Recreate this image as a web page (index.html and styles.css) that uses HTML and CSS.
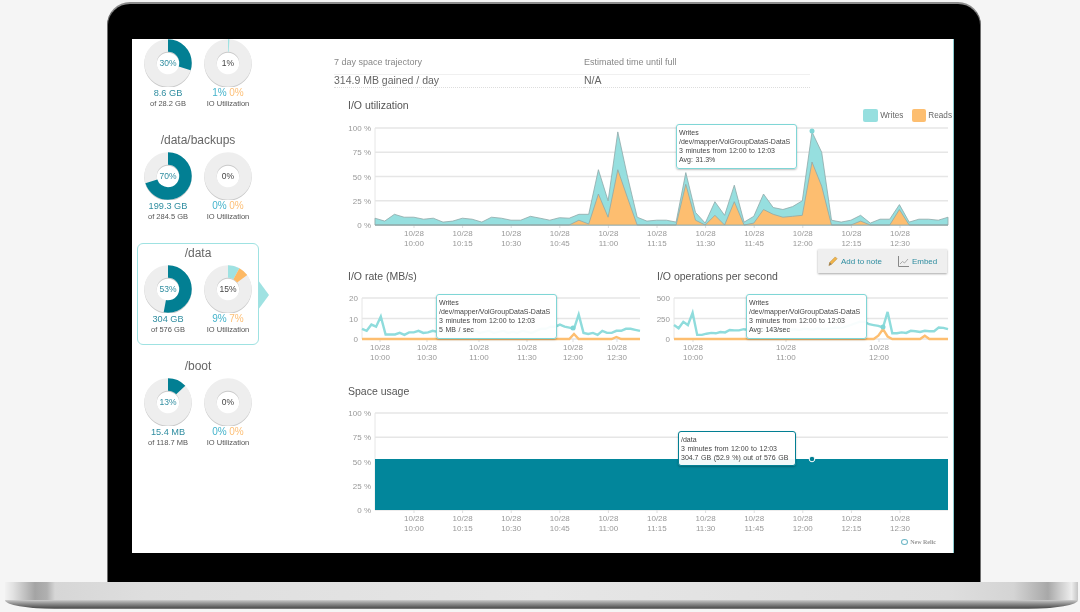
FILE: index.html
```html
<!DOCTYPE html>
<html>
<head>
<meta charset="utf-8"/>
<title>Disk overview</title>
<link rel="stylesheet" href="styles.css">
</head>
<body>
<div class="lid">
  <div class="screen">
    <div class="sidebar">
      <div class="disk">
        <h3></h3>
        <div class="disk-stats">
          <div class="stat">
            <svg class="donut" width="48" height="48" viewBox="0 0 48 48"><circle class="ring" cx="24" cy="24" r="17.5"/><circle class="used" cx="24" cy="24" r="17.5" pathLength="100" stroke-dasharray="30 100"/></svg>
            <div class="donut-label used-label">30%</div>
            <div class="value">8.6 GB</div>
            <div class="sub">of 28.2 GB</div>
          </div>
          <div class="stat">
            <svg class="donut" width="48" height="48" viewBox="0 0 48 48"><circle class="ring" cx="24" cy="24" r="17.5"/><circle class="writes" cx="24" cy="24" r="17.5" pathLength="100" stroke-dasharray="1 100"/></svg>
            <div class="donut-label">1%</div>
            <div class="value"><span class="w">1%</span> <span class="r">0%</span></div>
            <div class="sub">IO Utilization</div>
          </div>
        </div>
      </div>
      <div class="disk">
        <h3>/data/backups</h3>
        <div class="disk-stats">
          <div class="stat">
            <svg class="donut" width="48" height="48" viewBox="0 0 48 48"><circle class="ring" cx="24" cy="24" r="17.5"/><circle class="used" cx="24" cy="24" r="17.5" pathLength="100" stroke-dasharray="70 100"/></svg>
            <div class="donut-label used-label">70%</div>
            <div class="value">199.3 GB</div>
            <div class="sub">of 284.5 GB</div>
          </div>
          <div class="stat">
            <svg class="donut" width="48" height="48" viewBox="0 0 48 48"><circle class="ring" cx="24" cy="24" r="17.5"/></svg>
            <div class="donut-label">0%</div>
            <div class="value"><span class="w">0%</span> <span class="r">0%</span></div>
            <div class="sub">IO Utilization</div>
          </div>
        </div>
      </div>
      <div class="disk active">
        <h3>/data</h3>
        <div class="disk-stats">
          <div class="stat">
            <svg class="donut" width="48" height="48" viewBox="0 0 48 48"><circle class="ring" cx="24" cy="24" r="17.5"/><circle class="used" cx="24" cy="24" r="17.5" pathLength="100" stroke-dasharray="53 100"/></svg>
            <div class="donut-label used-label">53%</div>
            <div class="value">304 GB</div>
            <div class="sub">of 576 GB</div>
          </div>
          <div class="stat">
            <svg class="donut" width="48" height="48" viewBox="0 0 48 48"><circle class="ring" cx="24" cy="24" r="17.5"/><circle class="writes" cx="24" cy="24" r="17.5" pathLength="100" stroke-dasharray="8 100"/><circle class="reads" cx="24" cy="24" r="17.5" pathLength="100" stroke-dasharray="7 100" stroke-dashoffset="-8"/></svg>
            <div class="donut-label">15%</div>
            <div class="value"><span class="w">9%</span> <span class="r">7%</span></div>
            <div class="sub">IO Utilization</div>
          </div>
        </div>
      </div>
      <div class="disk">
        <h3>/boot</h3>
        <div class="disk-stats">
          <div class="stat">
            <svg class="donut" width="48" height="48" viewBox="0 0 48 48"><circle class="ring" cx="24" cy="24" r="17.5"/><circle class="used" cx="24" cy="24" r="17.5" pathLength="100" stroke-dasharray="13 100"/></svg>
            <div class="donut-label used-label">13%</div>
            <div class="value">15.4 MB</div>
            <div class="sub">of 118.7 MB</div>
          </div>
          <div class="stat">
            <svg class="donut" width="48" height="48" viewBox="0 0 48 48"><circle class="ring" cx="24" cy="24" r="17.5"/></svg>
            <div class="donut-label">0%</div>
            <div class="value"><span class="w">0%</span> <span class="r">0%</span></div>
            <div class="sub">IO Utilization</div>
          </div>
        </div>
      </div>
    </div>

    <div class="main">
      <div class="trajectory">
        <div class="label">7 day space trajectory</div>
        <div class="label">Estimated time until full</div>
        <div class="figure">314.9 MB gained / day</div>
        <div class="figure">N/A</div>
      </div>

      <div class="chart-head">
        <h4>I/O utilization</h4>
        <div class="legend">
          <span class="swatch swatch-writes"></span><span>Writes</span>
          <span class="swatch swatch-reads"></span><span>Reads</span>
        </div>
      </div>
      <div class="plot plot-util">
        <svg id="util" width="620" height="128"></svg>
        <div class="tip tip-util">Writes<br>/dev/mapper/VolGroupDataS-DataS<br>3 minutes from 12:00 to 12:03<br>Avg: 31.3%</div>
      </div>
      <div class="actions">
        <div class="action-box">
          <svg width="10" height="12" viewBox="0 0 11 12"><path d="M1 11l1-3.5L8 1.5l2 2L4 9.5z" fill="#f3b54a" stroke="#b98a3a" stroke-width=".6"/><path d="M1 11l1-3.5 2 2z" fill="#8a7a60"/></svg>
          <span>Add to note</span>
          <svg class="embed-icon" width="11" height="11" viewBox="0 0 11 11"><path d="M.5 0v10.5H11" fill="none" stroke="#888"/><path d="M2 8l2.5-2.5 2 1.5L10 3" fill="none" stroke="#999" stroke-width=".8"/></svg>
          <span>Embed</span>
        </div>
      </div>

      <div class="chart-row">
        <div class="half half-rate">
          <h4>I/O rate (MB/s)</h4>
          <div class="plot">
            <svg id="rate" width="309" height="80"></svg>
            <div class="tip tip-rate">Writes<br>/dev/mapper/VolGroupDataS-DataS<br>3 minutes from 12:00 to 12:03<br>5 MB / sec</div>
          </div>
        </div>
        <div class="half">
          <h4>I/O operations per second</h4>
          <div class="plot">
            <svg id="ops" width="311" height="80"></svg>
            <div class="tip tip-ops">Writes<br>/dev/mapper/VolGroupDataS-DataS<br>3 minutes from 12:00 to 12:03<br>Avg: 143/sec</div>
          </div>
        </div>
      </div>

      <h4 class="space-title">Space usage</h4>
      <div class="plot">
        <svg id="space" width="620" height="135"></svg>
        <div class="tip tip-space">/data<br>3 minutes from 12:00 to 12:03<br>304.7 GB (52.9 %) out of 576 GB</div>
      </div>
      <div class="brand"><span class="brand-ring"></span>New Relic</div>
    </div>
  </div>
</div>
<div class="base"><div class="base-top"></div><div class="base-lip"></div></div>
<script src="charts.js"></script>
</body>
</html>
```

FILE: styles.css
```css
html, body {
  margin: 0;
  height: 612px;
  overflow: hidden;
}

body {
  background-color: #f5f5f5;
  font-family: "Liberation Sans", Arial, sans-serif;
  padding-top: 2px;
  box-sizing: border-box;
}

h3, h4 {
  margin: 0;
  font-weight: normal;
}

/* laptop */
.lid {
  box-sizing: border-box;
  width: 874px;
  height: 580px;
  margin-left: 107px;
  padding: 35px 26px 29px 24px;
  background-color: #000;
  border: 1px solid #6e6e6e;
  border-top: 2px solid #8c8c8c;
  border-bottom: none;
  border-radius: 23px 23px 0 0;
}

.screen {
  box-sizing: border-box;
  display: flex;
  width: 822px;
  height: 514px;
  background-color: #fff;
  border-right: 1px solid #8ccbd0;
  overflow: hidden;
  filter: blur(.35px);
}

.base {
  width: 1073px;
  margin-left: 5px;
}

.base-top {
  height: 18px;
  background:
    linear-gradient(90deg, #f2f2f2 0, #e2e2e2 8px, #a4a4a4 30px, #b0b0b0 42px, #d6d6d6 50px, #dedede 140px, #e6e6e6 50%, #dedede 88%, #d4d4d4 94%, #a8a8a8 97.2%, #cfcfcf 98.4%, #ededed 99.4%, #c4c4c4 100%);
}

.base-lip {
  height: 9px;
  background: linear-gradient(180deg, #d0d0d0 0, #b4b4b4 15%, #8a8a8a 45%, #555 85%, #888 100%);
  border-radius: 0 0 50px 50px / 0 0 9px 9px;
}

/* sidebar */
.sidebar {
  flex: none;
  width: 197px;
  padding-left: 5px;
  margin-top: -22px;
}

.disk {
  position: relative;
  box-sizing: border-box;
  width: 122px;
  height: 102px;
  margin-bottom: 11px;
  border: 1px solid transparent;
  border-radius: 6px;
}

.disk h3 {
  height: 19px;
  line-height: 19px;
  font-size: 12px;
  color: #666;
  text-align: center;
}

.disk.active {
  border-color: #9fe2e2;
}

.disk.active::after {
  content: "";
  position: absolute;
  left: 120px;
  top: 36px;
  border-left: 11px solid #9fe2e2;
  border-top: 15px solid transparent;
  border-bottom: 15px solid transparent;
}

.disk-stats {
  display: grid;
  grid-template-columns: 60px 60px;
  padding-top: 2px;
}

.stat {
  position: relative;
  text-align: center;
}

.donut {
  display: block;
  margin: 0 auto;
  transform: rotate(-90deg);
}

.donut circle {
  fill: none;
  stroke-width: 12.5;
}

.donut .ring {
  stroke: #eeeeee;
  filter: drop-shadow(-.7px .7px .4px #c8c8c8);
}

.donut .used {
  stroke: #027f93;
}

.donut .writes {
  stroke: #9fe2e2;
}

.donut .reads {
  stroke: #fdb964;
}

.donut-label {
  position: absolute;
  left: 0;
  right: 0;
  top: 19px;
  font-size: 8.5px;
  line-height: 10px;
  color: #444;
}

.donut-label.used-label {
  color: #2f8da0;
}

.value {
  height: 12px;
  line-height: 12px;
  font-size: 9.2px;
  color: #2f8da0;
}

.value .w {
  font-size: 10px;
  color: #45b4cc;
}

.value .r {
  font-size: 10px;
  color: #fdbf76;
}

.sub {
  line-height: 9px;
  font-size: 7.5px;
  color: #555;
}

/* main column */
.main {
  flex: none;
  width: 620px;
}

.trajectory {
  display: grid;
  grid-template-columns: 250px 226px;
  width: 476px;
  padding-top: 17px;
}

.label {
  height: 18px;
  line-height: 13px;
  font-size: 9px;
  color: #888;
  border-bottom: 1px solid #f0f0f0;
}

.figure {
  height: 12px;
  line-height: 11px;
  font-size: 10.5px;
  color: #666;
  border-bottom: 1px dotted #ddd;
}

h4 {
  height: 16px;
  line-height: 16px;
  font-size: 10.5px;
  color: #555;
  padding-left: 14px;
}

.chart-head {
  display: flex;
  justify-content: space-between;
  height: 24px;
  margin-top: 9px;
}

.legend {
  display: flex;
  align-items: center;
  gap: 2px;
  height: 14px;
  margin-top: 11px;
  padding-right: 2px;
  font-size: 8.2px;
  color: #666;
}

.swatch {
  width: 15px;
  height: 13px;
  border-radius: 2px;
}

.swatch-writes {
  background-color: #96dfdf;
}

.swatch-reads {
  width: 14px;
  margin-left: 7px;
  background-color: #fdbe70;
}

.plot {
  position: relative;
}

.plot svg {
  display: block;
}

.plot svg text {
  font-size: 8px;
  fill: #999;
}

.tip {
  position: absolute;
  box-sizing: border-box;
  width: 121px;
  height: 45px;
  padding: 3px 0 0 2px;
  background-color: rgba(255, 255, 255, .94);
  border: 1.5px solid #7fd6d6;
  border-radius: 3px;
  box-shadow: 0 1px 2px rgba(0, 0, 0, .25);
  font-size: 7px;
  word-spacing: .6px;
  line-height: 9px;
  color: #444;
  white-space: nowrap;
}

.tip-util {
  left: 342px;
  top: 3px;
}

.tip-rate {
  left: 102px;
  top: 10px;
}

.tip-ops {
  left: 103px;
  top: 10px;
}

.tip-space {
  left: 344px;
  top: 32px;
  width: 118px;
  height: 35px;
  border-color: #027f93;
}

.actions {
  display: flex;
  justify-content: flex-end;
  padding-right: 7px;
  height: 24px;
}

.action-box {
  display: flex;
  align-items: center;
  box-sizing: border-box;
  width: 129px;
  padding-left: 10px;
  gap: 3px;
  background-color: #efefef;
  box-shadow: 0 1px 2px rgba(0, 0, 0, .35);
  font-size: 8px;
  color: #2f8da0;
}

.embed-icon {
  margin-left: 13px;
}

.chart-row {
  display: flex;
  margin-top: -5px;
}

.half-rate {
  width: 309px;
}

.space-title {
  margin-top: 19px;
}

.brand {
  display: flex;
  align-items: center;
  justify-content: flex-end;
  gap: 2px;
  height: 14px;
  margin-top: 1px;
  padding-right: 18px;
  font-family: "Liberation Serif", serif;
  font-weight: bold;
  font-size: 6px;
  color: #999;
}

.brand-ring {
  box-sizing: border-box;
  width: 7px;
  height: 6px;
  border: 1.5px solid #6cb6c6;
  border-radius: 50%;
}
```

FILE: charts.js
```javascript
var NS = 'http://www.w3.org/2000/svg';

function add(svg, tag, attrs, text) {
  var node = document.createElementNS(NS, tag);
  for (var k in attrs) node.setAttribute(k, attrs[k]);
  if (text) node.textContent = text;
  svg.appendChild(node);
  return node;
}

// mostly zero series, only the bumps are listed
function bumps(list) {
  var out = [];
  for (var i = 0; i < 60; i++) out.push(list[i] || 0);
  return out;
}

function frame(svg, c) {
  var i, y;
  for (i = 0; i < c.yLabels.length; i++) {
    y = c.top + (c.bottom - c.top) * i / (c.yLabels.length - 1);
    add(svg, 'line', {x1: c.left, x2: c.right, y1: y, y2: y, stroke: '#e6e6e6', 'stroke-width': 1.5});
    add(svg, 'text', {x: c.left - 4, y: y + 3, 'text-anchor': 'end'}, c.yLabels[i]);
  }
  add(svg, 'line', {x1: c.left, x2: c.left, y1: c.top, y2: c.bottom, stroke: '#e6e6e6', 'stroke-width': 1});
  for (i = 0; i < c.xLabels.length; i++) {
    add(svg, 'line', {x1: c.xs[i], x2: c.xs[i], y1: c.bottom, y2: c.bottom + 3, stroke: '#ddd'});
    add(svg, 'text', {x: c.xs[i], y: c.bottom + 11, 'text-anchor': 'middle'}, '10/28');
    add(svg, 'text', {x: c.xs[i], y: c.bottom + 21, 'text-anchor': 'middle'}, c.xLabels[i]);
  }
}

function points(c, data) {
  var step = (c.right - c.left) / (data.length - 1), out = [];
  for (var i = 0; i < data.length; i++) {
    out.push((c.left + i * step).toFixed(1) + ',' + (c.bottom - (c.bottom - c.top) * data[i] / c.max).toFixed(1));
  }
  return out;
}

function area(svg, c, data, fill) {
  var p = points(c, data);
  p.unshift(c.left + ',' + c.bottom);
  p.push(c.right + ',' + c.bottom);
  add(svg, 'polygon', {points: p.join(' '), fill: fill, stroke: '#8fa8a8', 'stroke-width': .8});
}

function line(svg, c, data, color) {
  add(svg, 'polyline', {points: points(c, data).join(' '), fill: 'none', stroke: color, 'stroke-width': 2.4});
}

var pctLabels = ['100 %', '75 %', '50 %', '25 %', '0 %'];
var longTimes = ['10:00', '10:15', '10:30', '10:45', '11:00', '11:15', '11:30', '11:45', '12:00', '12:15', '12:30'];

function evenly(start) {
  return longTimes.map(function (t, i) { return start + 48.6 * i; });
}

// I/O utilization
var util = document.getElementById('util');
var c = {left: 41, right: 614, top: 7, bottom: 104, max: 100, yLabels: pctLabels, xLabels: longTimes, xs: evenly(80)};
frame(util, c);
area(util, c, [7,4,11,8,8,6,7,3,4,7,6,3,8,7,5,5,9,7,5,7.5,7,11,11,57,25,96,50,8,4,5,5,3,54,13,2,24,10,41,3,9,32,18,16,19,25,96,75,5,3,5,10,2,6,6,21,3,6,6,5,8], '#96dfdf');
area(util, c, bumps({21:5,22:1,23:32,24:8,25:57,26:28,32:42,33:5,35:10,37:24,39:2,40:16,41:11,42:8,43:9,44:10,45:65,46:40,50:4,54:16}), '#fdbe70');
add(util, 'circle', {cx: 478, cy: 10, r: 2.5, fill: '#7fd6d6'});

// I/O rate
var rate = document.getElementById('rate');
c = {left: 28, right: 306, top: 14, bottom: 55, max: 20, yLabels: ['20', '10', '0'], xLabels: ['10:00', '10:30', '11:00', '11:30', '12:00', '12:30'], xs: [46, 93, 145, 193, 239, 283]};
frame(rate, c);
line(rate, c, bumps({45:2.5,54:1}), '#fdbe70');
line(rate, c, [5,4,7,6,11,2.2,2.2,2.2,3,2,3.2,3.2,4,3,3.2,4,3.5,4,3,3.5,4,3,3.5,3,4,3,3.5,4,3,3.5,4,3,3.5,3,4,3.5,3,4,5,5,6,6,7,6,5.5,5,12,3,2.5,3,2,4,3,3,4,4,5,5,4.5,4], '#8fdcdc');
add(rate, 'circle', {cx: 239, cy: 44, r: 2.5, fill: '#7fd6d6'});

// I/O operations
var ops = document.getElementById('ops');
c = {left: 31, right: 305, top: 14, bottom: 55, max: 500, yLabels: ['500', '250', '0'], xLabels: ['10:00', '11:00', '12:00'], xs: [50, 143, 236]};
frame(ops, c);
line(ops, c, bumps({44:40,45:120,46:30,54:40}), '#fdbe70');
line(ops, c, [170,130,210,170,320,50,50,65,75,70,85,80,110,105,105,120,110,115,120,110,120,115,110,120,130,115,120,110,125,120,115,130,120,125,130,140,130,150,170,190,210,210,180,170,160,140,330,70,70,80,75,100,95,85,100,95,95,140,135,120], '#8fdcdc');
add(ops, 'circle', {cx: 240, cy: 43, r: 2.5, fill: '#7fd6d6'});

// Space usage
var space = document.getElementById('space');
c = {left: 41, right: 614, top: 14, bottom: 111, max: 100, yLabels: pctLabels, xLabels: longTimes, xs: evenly(80)};
frame(space, c);
add(space, 'rect', {x: 41, y: 60, width: 573, height: 51, fill: '#02869b'});
add(space, 'circle', {cx: 478, cy: 60, r: 2.8, fill: '#027f93', stroke: '#fff', 'stroke-width': 1});
```
